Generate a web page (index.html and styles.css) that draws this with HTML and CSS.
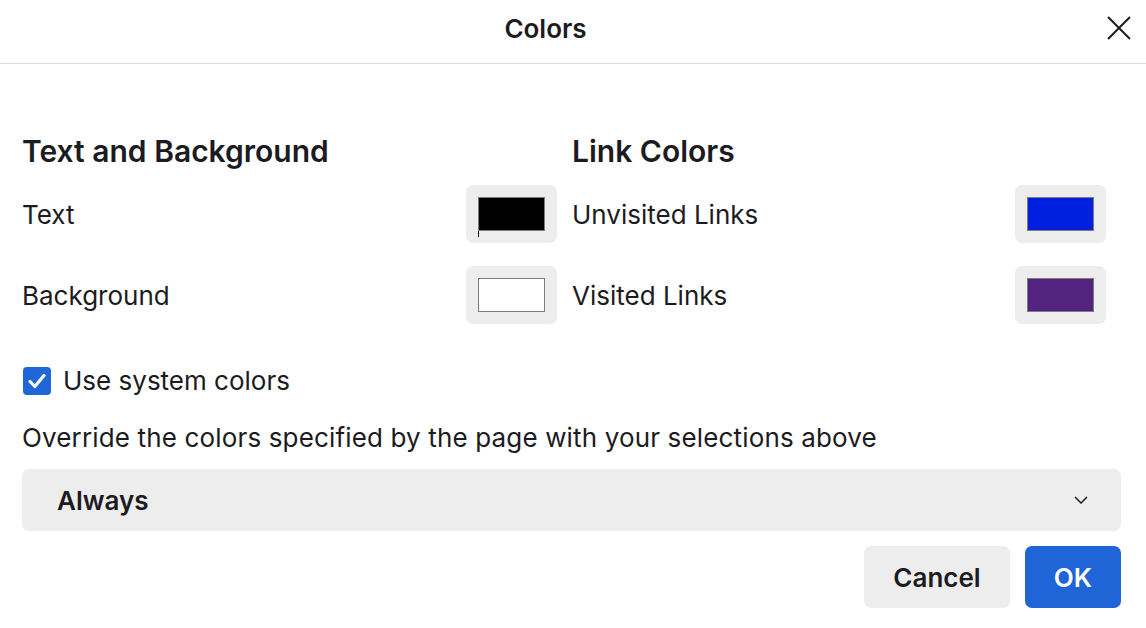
FILE: index.html
```html
<!DOCTYPE html>
<html lang="en">
<head>
<meta charset="utf-8">
<title>Colors</title>
<link rel="stylesheet" href="styles.css">
</head>
<body>
<div class="dialog">
  <header class="titlebar">
    <h1 class="title">Colors</h1>
    <button class="close" aria-label="Close">
      <svg width="24" height="24" viewBox="0 0 24 24"><path d="M1 1 L23 23 M23 1 L1 23" stroke="#1c1b22" stroke-width="2" fill="none"/></svg>
    </button>
  </header>
  <main class="content">
    <div class="columns">
      <section class="group">
        <h2 class="group-title">Text and Background</h2>
        <div class="row">
          <span class="label">Text</span>
          <span class="swatch-btn"><span class="swatch swatch-black"></span><span class="caret"></span></span>
        </div>
        <div class="row">
          <span class="label">Background</span>
          <span class="swatch-btn"><span class="swatch swatch-white"></span></span>
        </div>
      </section>
      <section class="group">
        <h2 class="group-title">Link Colors</h2>
        <div class="row">
          <span class="label">Unvisited Links</span>
          <span class="swatch-btn"><span class="swatch swatch-blue"></span></span>
        </div>
        <div class="row">
          <span class="label">Visited Links</span>
          <span class="swatch-btn"><span class="swatch swatch-purple"></span></span>
        </div>
      </section>
    </div>
    <label class="check-row">
      <span class="checkbox">
        <svg width="28" height="28" viewBox="0 0 28 28"><path d="M7 14.5 L11.8 19.5 L21 8.5" stroke="#fff" stroke-width="3.2" fill="none" stroke-linecap="round" stroke-linejoin="round"/></svg>
      </span>
      <span class="check-label">Use system colors</span>
    </label>
    <p class="override">Override the colors specified by the page with your selections above</p>
    <div class="select">
      <span class="select-value">Always</span>
      <svg class="chevron" width="14" height="8" viewBox="0 0 14 8"><path d="M1 1 L7 7 L13 1" stroke="#1c1b22" stroke-width="1.5" fill="none"/></svg>
    </div>
    <div class="actions">
      <button class="btn btn-cancel">Cancel</button>
      <button class="btn btn-ok">OK</button>
    </div>
  </main>
</div>
</body>
</html>
```

FILE: styles.css
```css
* { box-sizing: border-box; }
html, body {
  margin: 0;
  padding: 0;
  background: #fff;
}
body {
  font-family: Inter, "Noto Sans", sans-serif;
  color: #1c1b22;
  width: 1146px;
  height: 628px;
  overflow: hidden;
}
.titlebar {
  height: 64px;
  border-bottom: 1px solid #dcdcdf;
  display: flex;
  align-items: center;
  justify-content: center;
  padding-right: 55px;
  position: relative;
}
.title {
  margin: 0;
  font-size: 26px;
  font-weight: 600;
  line-height: 30px;
  padding-bottom: 6px;
}
.close {
  position: absolute;
  right: 15px;
  top: 16px;
  border: 0;
  background: none;
  padding: 0;
  width: 24px;
  height: 24px;
  display: flex;
}
.content {
  padding: 0 25px 0 22px;
}
.columns {
  display: grid;
  grid-template-columns: 535px 534px;
  column-gap: 15px;
  padding-top: 68px;
}
.group-title {
  margin: 0 0 14px 0;
  font-size: 30px;
  font-weight: 600;
  line-height: 39px;
}
.row {
  display: flex;
  align-items: center;
  justify-content: space-between;
  height: 58px;
  margin-bottom: 23px;
}
.label {
  font-size: 26px;
  line-height: 32px;
  padding-top: 2px;
}
.swatch-btn {
  width: 91px;
  height: 58px;
  background: #ededed;
  border-radius: 7px;
  display: flex;
  align-items: center;
  justify-content: center;
  position: relative;
}
.swatch {
  width: 67px;
  height: 34px;
  border: 1px solid #7c7c7c;
}
.swatch-black { background: #000; }
.swatch-white { background: #fff; }
.swatch-blue { background: #0020e0; }
.swatch-purple { background: #53237f; }
.caret {
  position: absolute;
  left: 12px;
  top: 46px;
  width: 1px;
  height: 6px;
  background: #000;
}
.check-row {
  display: flex;
  align-items: center;
  gap: 12px;
  margin-top: 18px;
  padding-left: 1px;
}
.checkbox {
  width: 28px;
  height: 28px;
  border-radius: 4px;
  background: #1f66d9;
  display: flex;
  align-items: center;
  justify-content: center;
}
.check-label {
  font-size: 26px;
  line-height: 32px;
}
.override {
  margin: 25px 0 0 0;
  font-size: 26px;
  line-height: 32px;
  letter-spacing: 0.15px;
}
.select {
  margin-top: 15px;
  height: 62px;
  background: #ededed;
  border-radius: 7px;
  display: flex;
  align-items: center;
  justify-content: space-between;
  padding: 0 33px 0 35px;
  width: 1099px;
}
.select-value {
  font-size: 26px;
  font-weight: 600;
}
.actions {
  display: flex;
  justify-content: flex-end;
  gap: 15px;
  margin-top: 15px;
  width: 1099px;
}
.btn {
  height: 62px;
  border: 0;
  border-radius: 7px;
  font-family: inherit;
  font-size: 26px;
  font-weight: 600;
}
.btn-cancel {
  width: 146px;
  background: #ededed;
  color: #1c1b22;
}
.btn-ok {
  width: 96px;
  background: #1f65d8;
  color: #fff;
}
```
